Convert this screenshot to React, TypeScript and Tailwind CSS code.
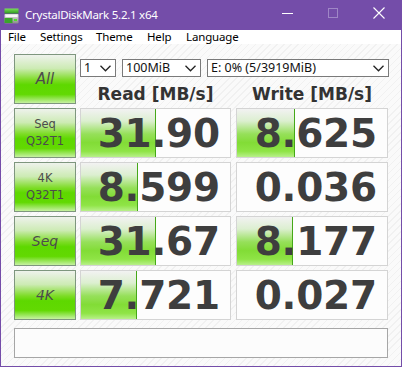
import React from "react";

const btnBg =
  "bg-[linear-gradient(to_bottom,#eef2ec_0%,#cdebb4_28%,#7ddc26_52%,#5ed800_62%,#62d902_82%,#c6f1a2_100%)]";
const barBg =
  "bg-[linear-gradient(to_bottom,#f2f2f2_0%,#dcefd0_25%,#96e05a_52%,#82dc36_70%,#8fe446_88%,#b8f08a_100%)]";

function Chevron() {
  return (
    <svg width="11" height="7" viewBox="0 0 11 7" className="shrink-0">
      <polyline points="0.5,0.8 5.5,5.8 10.5,0.8" fill="none" stroke="#222" strokeWidth="1.3" />
    </svg>
  );
}

function Combo({ w, text }: { w: string; text: string }) {
  return (
    <div className={`${w} h-[18px] bg-white border border-[#7a7a7a] flex items-center justify-between pl-[3px] pr-[4px]`}>
      <span className="text-[12.5px] leading-none text-[#111] font-['Noto_Sans',sans-serif]">{text}</span>
      <Chevron />
    </div>
  );
}

function TestButton({ children }: { children: React.ReactNode }) {
  return (
    <div
      className={`w-[62px] h-[50px] shrink-0 border border-[#7e967e] ${btnBg} flex flex-col items-center justify-center text-[#4c4c4c] font-['DejaVu_Sans',sans-serif] leading-[16px]`}
    >
      {children}
    </div>
  );
}

function ValueBox({ value, bar, w }: { value: string; bar: number; w: string }) {
  return (
    <div className={`${w} h-[50px] shrink-0 relative border border-[#d4d4d4] bg-[#fdfdfd] overflow-hidden`}>
      {bar > 0 && (
        <div
          className={`absolute left-0 top-0 bottom-0 ${barBg} border-r border-[#45a818]`}
          style={{ width: bar }}
        />
      )}
      <div className="relative h-full flex items-center justify-end pr-[10px] text-[39px] font-bold text-[#3e3e3e] font-['DejaVu_Sans',sans-serif] leading-none tracking-[-0.2px]">
        {value}
      </div>
    </div>
  );
}

const rows = [
  { label: ["Seq", "Q32T1"], read: "31.90", rbar: 75, write: "8.625", wbar: 58, italic: false },
  { label: ["4K", "Q32T1"], read: "8.599", rbar: 57, write: "0.036", wbar: 0, italic: false },
  { label: ["Seq"], read: "31.67", rbar: 75, write: "8.177", wbar: 56, italic: true },
  { label: ["4K"], read: "7.721", rbar: 56, write: "0.027", wbar: 0, italic: true },
];

export default function App() {
  return (
    <div className="w-[402px] h-[367px] bg-[#744da9] flex flex-col px-px pb-px overflow-hidden">
      {/* Title bar */}
      <div className="h-[30px] flex items-center relative shrink-0">
        <svg width="15" height="16" viewBox="0 0 15 16" className="ml-[3px] mt-[1px]">
          <defs>
            <linearGradient id="g1" x1="0" y1="0" x2="0" y2="1">
              <stop offset="0" stopColor="#7be05a" />
              <stop offset="1" stopColor="#2e9a1e" />
            </linearGradient>
            <linearGradient id="g2" x1="0" y1="0" x2="0" y2="1">
              <stop offset="0" stopColor="#e6e6e6" />
              <stop offset="1" stopColor="#8a8a8a" />
            </linearGradient>
          </defs>
          <rect x="0.5" y="0.5" width="14" height="5" fill="url(#g1)" />
          <rect x="0.5" y="6" width="14" height="9.5" rx="1" fill="url(#g2)" />
          <rect x="1.5" y="7" width="12" height="2" fill="#f8f8f8" />
          <rect x="0.5" y="10" width="8" height="5" fill="#3aa52a" />
          <rect x="10" y="11" width="3" height="2" fill="#4ddf2a" />
        </svg>
        <span className="ml-[6px] text-white text-[11.5px] tracking-[-0.25px] font-['Noto_Sans',sans-serif] leading-none">
          CrystalDiskMark 5.2.1 x64
        </span>
        <div className="absolute left-[281px] top-[13px] w-[11px] h-px bg-white" />
        <div className="absolute left-[327px] top-[8px] w-[10px] h-[10px] border border-[#9f86c6]" />
        <svg className="absolute left-[372px] top-[7px]" width="12" height="12" viewBox="0 0 12 12">
          <path d="M0.5 0.5 L11.5 11.5 M11.5 0.5 L0.5 11.5" stroke="#fff" strokeWidth="1.1" />
        </svg>
      </div>
      {/* Menu */}
      <div className="h-[14px] bg-white relative shrink-0 text-[11.5px] tracking-[-0.15px] text-black font-['Noto_Sans',sans-serif] leading-[14px]">
        <span className="absolute left-[7px] top-0">File</span>
        <span className="absolute left-[39px] top-0">Settings</span>
        <span className="absolute left-[95px] top-0">Theme</span>
        <span className="absolute left-[146px] top-0">Help</span>
        <span className="absolute left-[185px] top-0">Language</span>
      </div>
      {/* Content */}
      <div className="flex-1 bg-[repeating-linear-gradient(135deg,#f1f1f1_0px,#f1f1f1_1px,#fafafa_1px,#fafafa_5px)] pl-[13px] pt-[10px] flex flex-col">
        <div className="flex flex-col gap-[4px]">
          {/* Top row */}
          <div className="flex h-[50px]">
            <TestButton>
              <span className="italic text-[15px]">All</span>
            </TestButton>
            <div className="ml-[4px] flex flex-col">
              <div className="flex gap-[6px] mt-[5px]">
                <Combo w="w-[36px]" text="1" />
                <Combo w="w-[79px]" text="100MiB" />
                <Combo w="w-[182px]" text="E: 0% (5/3919MiB)" />
              </div>
              <div className="flex mt-[7px] text-[17px] font-bold text-[#333] font-['DejaVu_Sans',sans-serif] leading-[20px]">
                <div className="w-[151px] text-center">Read [MB/s]</div>
                <div className="w-[152px] ml-[5px] text-center">Write [MB/s]</div>
              </div>
            </div>
          </div>
          {rows.map((r, i) => (
            <div key={i} className="flex h-[50px]">
              <TestButton>
                {r.label.length === 2 ? (
                  <>
                    <span className="text-[11.5px] leading-[17px]">{r.label[0]}</span>
                    <span className="text-[11.5px] leading-[17px]">{r.label[1]}</span>
                  </>
                ) : (
                  <span className={`${r.italic ? "italic" : ""} text-[14px]`}>{r.label[0]}</span>
                )}
              </TestButton>
              <div className="ml-[4px]">
                <ValueBox w="w-[151px]" value={r.read} bar={r.rbar} />
              </div>
              <div className="ml-[5px]">
                <ValueBox w="w-[152px]" value={r.write} bar={r.wbar} />
              </div>
            </div>
          ))}
        </div>
        <div className="mt-[8px] w-[374px] h-[30px] border border-[#a6a6a6] bg-[#fcfcfc]" />
      </div>
    </div>
  );
}
